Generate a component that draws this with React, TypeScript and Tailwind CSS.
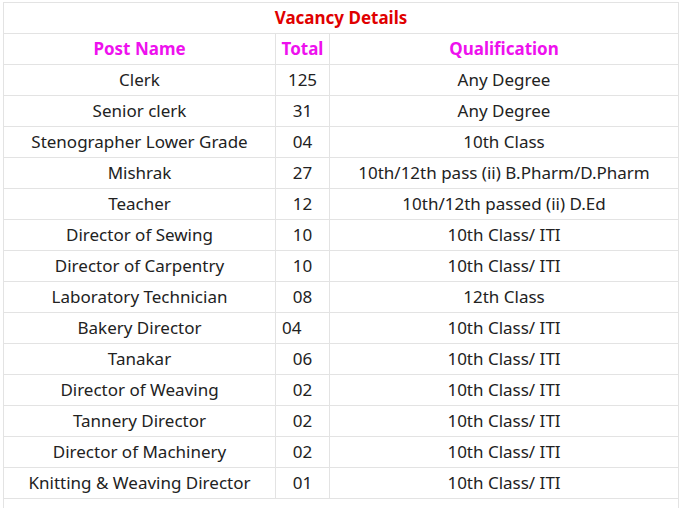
const rows = [
  { post: "Clerk", total: "125", qual: "Any Degree" },
  { post: "Senior clerk", total: "31", qual: "Any Degree" },
  { post: "Stenographer Lower Grade", total: "04", qual: "10th Class" },
  { post: "Mishrak", total: "27", qual: "10th/12th pass (ii) B.Pharm/D.Pharm" },
  { post: "Teacher", total: "12", qual: "10th/12th passed (ii) D.Ed" },
  { post: "Director of Sewing", total: "10", qual: "10th Class/ ITI" },
  { post: "Director of Carpentry", total: "10", qual: "10th Class/ ITI" },
  { post: "Laboratory Technician", total: "08", qual: "12th Class" },
  { post: "Bakery Director", total: "04", qual: "10th Class/ ITI", left: true },
  { post: "Tanakar", total: "06", qual: "10th Class/ ITI" },
  { post: "Director of Weaving", total: "02", qual: "10th Class/ ITI" },
  { post: "Tannery Director", total: "02", qual: "10th Class/ ITI" },
  { post: "Director of Machinery", total: "02", qual: "10th Class/ ITI" },
  { post: "Knitting & Weaving Director", total: "01", qual: "10th Class/ ITI" },
];

const cell = "border border-[#e3e3e3] h-[31px] p-0 text-center align-middle";

export default function App() {
  return (
    <div className="min-h-screen bg-white pt-[2px] pl-[3px] font-['Noto_Sans','Open_Sans',sans-serif] text-[17px] text-[#222] overflow-hidden">
      <table className="w-[675px] table-fixed border-collapse border border-[#dcdcdc]">
        <colgroup>
          <col className="w-[272px]" />
          <col className="w-[54px]" />
          <col className="w-[349px]" />
        </colgroup>
        <tbody>
          <tr>
            <td colSpan={3} className={`${cell} font-bold text-[#e00000]`}>
              Vacancy Details
            </td>
          </tr>
          <tr className="font-bold text-[#ee11ee]">
            <td className={cell}>Post Name</td>
            <td className={cell}>Total</td>
            <td className={cell}>Qualification</td>
          </tr>
          {rows.map((r) => (
            <tr key={r.post}>
              <td className={cell}>{r.post}</td>
              <td className={r.left ? `${cell} !text-left !pl-[6px]` : cell}>{r.total}</td>
              <td className={cell}>{r.qual}</td>
            </tr>
          ))}
          <tr>
            <td colSpan={3} className={cell}>
              Candidates should check full notification for the qualification details
            </td>
          </tr>
        </tbody>
      </table>
    </div>
  );
}
